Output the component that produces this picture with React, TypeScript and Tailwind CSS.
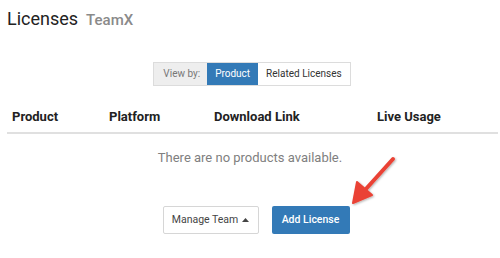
import React from 'react'

export default function App() {
  return (
    <div className="relative h-[258px] w-[500px] overflow-hidden bg-white font-['Roboto',sans-serif] text-[#222]">
      <div className="flex items-baseline gap-[8px] pl-[7px] pt-[7px]">
        <h1 className="text-[18px] leading-[24px]">Licenses</h1>
        <span className="text-[15px] font-medium text-[#8a8a8a]">TeamX</span>
      </div>

      <div className="mt-[30px] flex justify-center pl-[4px]">
        <div className="flex h-[24px] border border-[#dcdcdc] text-[10px]">
          <span className="flex items-center bg-[#eeeeee] pl-[9px] pr-[7px] text-[#777]">View by:</span>
          <span className="flex items-center bg-[#337ab7] px-[8px] text-white">Product</span>
          <span className="flex items-center bg-white px-[8px] text-[#333]">Related Licenses</span>
        </div>
      </div>

      <div className="ml-[7px] mr-[2px] mt-[16px]">
        <div className="flex h-[32px] items-center border-b-2 border-[#e0e0e0] text-[13px] font-bold">
          <div className="w-[102px] pl-[5px]">Product</div>
          <div className="w-[105px]">Platform</div>
          <div className="w-[163px]">Download Link</div>
          <div>Live Usage</div>
        </div>
        <p className="mt-[14px] pr-[5px] text-center text-[13px] text-[#808080]">There are no products available.</p>
      </div>

      <div className="mt-[39px] flex justify-center gap-[13px] pl-[12px]">
        <button className="flex h-[28px] w-[96px] items-center justify-center gap-[4px] rounded-[2px] border border-[#d6d6d6] bg-white text-[10.5px] text-[#444]">
          Manage Team
          <svg width="7" height="4" viewBox="0 0 7 4"><path d="M0 4 L3.5 0 L7 4 Z" fill="#444" /></svg>
        </button>
        <button className="h-[28px] w-[78px] rounded-[2px] bg-[#337ab7] text-[10.5px] font-medium text-white">Add License</button>
      </div>

      <svg className="absolute left-0 top-0" width="500" height="258" viewBox="0 0 500 258">
        <defs>
          <filter id="sh" x="-20%" y="-20%" width="140%" height="140%">
            <feDropShadow dx="1" dy="1" stdDeviation="1" floodColor="#000" floodOpacity="0.3" />
          </filter>
        </defs>
        <g filter="url(#sh)">
          <line x1="393" y1="159" x2="365" y2="190" stroke="#ea4335" strokeWidth="4" strokeLinecap="round" />
          <path d="M353 203 L357 182 L372 195 Z" fill="#ea4335" stroke="#ea4335" strokeWidth="2" strokeLinejoin="round" />
        </g>
      </svg>
    </div>
  )
}
